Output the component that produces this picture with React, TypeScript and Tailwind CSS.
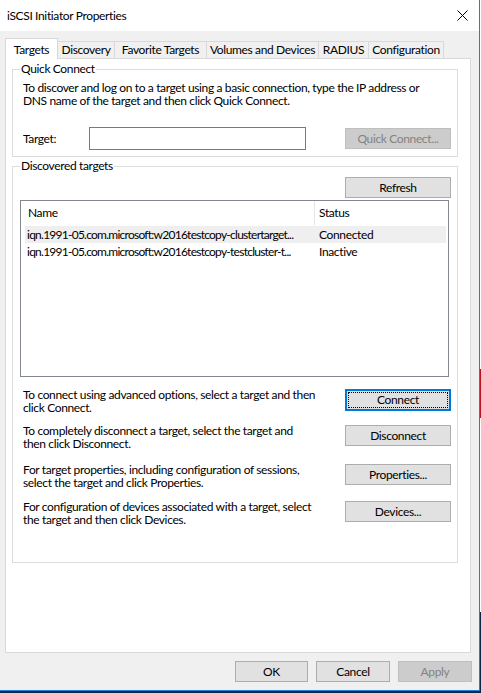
import React from 'react';

const FONT = "font-['Segoe_UI',Lato,'Noto_Sans',sans-serif] tracking-[-0.36px]";

function Btn({ label, w = 'w-[106px]', disabled = false, focused = false }: { label: string; w?: string; disabled?: boolean; focused?: boolean }) {
  if (focused) {
    return (
      <div className={`${w} h-[22px] border-2 border-[#0078d7] bg-[#e1e1e1] p-px`}>
        <div className="h-full w-full outline-1 outline-dotted outline-black -outline-offset-1 flex items-center justify-center text-[12px] leading-none text-black">
          {label}
        </div>
      </div>
    );
  }
  return (
    <div
      className={`${w} h-[21px] border flex items-center justify-center text-[12px] leading-none ${
        disabled ? 'bg-[#cccccc] border-[#bfbfbf] text-[#838383]' : 'bg-[#e1e1e1] border-[#adadad] text-black'
      }`}
    >
      {label}
    </div>
  );
}

const tabs = [
  { name: 'Discovery', w: 'w-[57px]' },
  { name: 'Favorite Targets', w: 'w-[92px]' },
  { name: 'Volumes and Devices', w: 'w-[112px]' },
  { name: 'RADIUS', w: 'w-[50px]' },
  { name: 'Configuration', w: 'w-[75px]' },
];

// rows below the list: text on the left, button on the right
const actions = [
  { text: ['To connect using advanced options, select a target and then', 'click Connect.'], btn: 'Connect', mt: 'mt-[11px]', focused: true },
  { text: ['To completely disconnect a target, select the target and', 'then click Disconnect.'], btn: 'Disconnect', mt: 'mt-[10px]' },
  { text: ['For target properties, including configuration of sessions,', 'select the target and click Properties.'], btn: 'Properties...', mt: 'mt-[13px]' },
  { text: ['For configuration of devices associated with a target, select', 'the target and then click Devices.'], btn: 'Devices...', mt: 'mt-[11px]' },
];

const targets = [
  { name: 'iqn.1991-05.com.microsoft:w2016testcopy-clustertarget...', status: 'Connected', selected: true },
  { name: 'iqn.1991-05.com.microsoft:w2016testcopy-testcluster-t...', status: 'Inactive', selected: false },
];

export default function App() {
  return (
    <div className={`w-[481px] h-[693px] flex bg-[#0b2748] overflow-hidden ${FONT}`}>
      {/* window */}
      <div className="w-[480px] h-[691px] shrink-0 flex flex-col bg-[#f0f0f0] border-r border-b border-[#1883d7]">
        {/* title bar */}
        <div className="h-[31px] bg-white flex items-center justify-between pl-[7px] pr-[11px] shrink-0">
          <span className="text-[12px] text-black leading-none">iSCSI Initiator Properties</span>
          <svg width="11" height="11" viewBox="0 0 11 11">
            <path d="M0.5 0.5 L10.5 10.5 M10.5 0.5 L0.5 10.5" stroke="#000" strokeWidth="1" />
          </svg>
        </div>

        <div className="flex-1 flex flex-col px-[5px] pt-[7px]">
          {/* tabs */}
          <div className="flex items-end h-[20px] relative z-10">
            <div className="w-[53px] h-[21px] -mb-px bg-white border border-b-0 border-[#d9d9d9] flex items-start justify-center pt-[2px] text-[12px] text-black">
              Targets
            </div>
            {tabs.map(t => (
              <div
                key={t.name}
                className={`${t.w} h-[17px] border-t border-r border-[#d9d9d9] bg-[#f0f0f0] flex items-center justify-center whitespace-nowrap text-[12px] text-black leading-none`}
              >
                {t.name}
              </div>
            ))}
          </div>

          {/* panel */}
          <div className="w-[466px] h-[595px] bg-white border border-[#d9d9d9] px-[6px]">
            {/* Quick Connect */}
            <fieldset className="mt-[3px] w-[446px] h-[95px] border border-[#dcdcdc] pl-[10px] pr-[6px]">
              <legend className="ml-[-3px] px-px text-[12px] leading-[14px] text-black">Quick Connect</legend>
              <p className="mt-[5px] text-[12px] leading-[13px] text-black">
                To discover and log on to a target using a basic connection, type the IP address or
                <br />
                DNS name of the target and then click Quick Connect.
              </p>
              <div className="mt-[20px] flex items-center">
                <span className="w-[66px] text-[12px] text-black">Target:</span>
                <div className="w-[217px] h-[23px] border border-[#7a7a7a] bg-white" />
                <div className="ml-auto">
                  <Btn label="Quick Connect..." disabled />
                </div>
              </div>
            </fieldset>

            {/* Discovered targets */}
            <fieldset className="mt-[2px] w-[446px] h-[404px] border border-[#dcdcdc] pl-[7px] pr-[6px]">
              <legend className="ml-[0px] px-px text-[12px] leading-[14px] text-black">Discovered targets</legend>
              <div className="mt-[4px] flex justify-end">
                <Btn label="Refresh" />
              </div>

              <div className="mt-[2px] w-[429px] h-[177px] border border-[#828790] bg-white">
                <div className="h-[24px] flex items-center text-[12px] text-black">
                  <div className="w-[294px] h-full pl-[7px] flex items-center border-r border-[#e5e5e5]">Name</div>
                  <div className="pl-[4px]">Status</div>
                </div>
                <div className="mt-[1px]">
                  {targets.map(t => (
                    <div
                      key={t.name}
                      className={`ml-[4px] w-[421px] h-[17px] flex items-center text-[12px] text-black ${t.selected ? 'bg-[#efefef]' : ''}`}
                    >
                      <div className="w-[289px] pl-[2px] whitespace-nowrap overflow-hidden tracking-[-0.75px]">{t.name}</div>
                      <div className="pl-[5px]">{t.status}</div>
                    </div>
                  ))}
                </div>
              </div>

              {actions.map(a => (
                <div key={a.btn} className={`${a.mt} flex items-start pl-[3px]`}>
                  <p className="text-[12px] leading-[13px] text-black whitespace-nowrap">
                    {a.text[0]}
                    <br />
                    {a.text[1]}
                  </p>
                  <div className="ml-auto mt-px">
                    <Btn label={a.btn} focused={a.focused} />
                  </div>
                </div>
              ))}
            </fieldset>
          </div>

          {/* dialog buttons */}
          <div className="mt-[8px] mr-[2px] flex justify-end gap-[8px]">
            <Btn label="OK" w="w-[73px]" />
            <Btn label="Cancel" w="w-[74px]" />
            <Btn label="Apply" w="w-[74px]" disabled />
          </div>
        </div>
      </div>

      {/* outside strip */}
      <div className="flex-1 flex flex-col">
        <div className="h-[369px] bg-white" />
        <div className="h-[49px] bg-[#c50f1f]" />
        <div className="h-[194px] bg-white" />
        <div className="flex-1 bg-[#0b2748]" />
      </div>
    </div>
  );
}
